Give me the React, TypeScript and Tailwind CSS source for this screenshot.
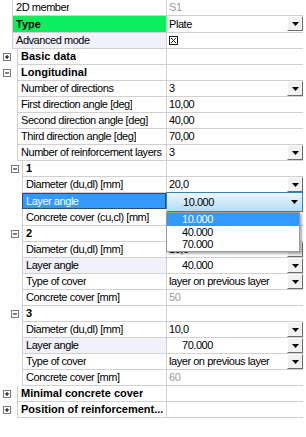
import React from 'react';

type Row = {
  label: string;
  value?: string;
  level: 0 | 1 | 2;
  expander?: '+' | '-';
  bold?: boolean;
  combo?: boolean;
  muted?: boolean;
  tint?: boolean;
  shift?: boolean;
  check?: boolean;
  green?: boolean;
  tall?: boolean;
  selected?: boolean;
};

const rows: Row[] = [
  { label: '2D member', value: 'S1', level: 0, muted: true },
  { label: 'Type', value: 'Plate', level: 0, bold: true, green: true, combo: true, tall: true },
  { label: 'Advanced mode', level: 0, check: true, tint: true },
  { label: 'Basic data', level: 1, expander: '+', bold: true },
  { label: 'Longitudinal', level: 1, expander: '-', bold: true },
  { label: 'Number of directions', value: '3', level: 1, combo: true },
  { label: 'First direction angle [deg]', value: '10,00', level: 1 },
  { label: 'Second direction angle [deg]', value: '40,00', level: 1 },
  { label: 'Third direction angle [deg]', value: '70,00', level: 1 },
  { label: 'Number of reinforcement layers', value: '3', level: 1, combo: true },
  { label: '1', level: 2, expander: '-', bold: true },
  { label: 'Diameter (du,dl) [mm]', value: '20,0', level: 2, combo: true },
  { label: 'Layer angle', value: '10.000', level: 2, selected: true },
  { label: 'Concrete cover (cu,cl) [mm]', value: '30', level: 2, tall: true },
  { label: '2', level: 2, expander: '-', bold: true },
  { label: 'Diameter (du,dl) [mm]', value: '10,0', level: 2, combo: true },
  { label: 'Layer angle', value: '40.000', level: 2, combo: true, tint: true, shift: true },
  { label: 'Type of cover', value: 'layer on previous layer', level: 2, combo: true },
  { label: 'Concrete cover [mm]', value: '50', level: 2, muted: true },
  { label: '3', level: 2, expander: '-', bold: true },
  { label: 'Diameter (du,dl) [mm]', value: '10,0', level: 2, combo: true },
  { label: 'Layer angle', value: '70.000', level: 2, combo: true, tint: true, shift: true },
  { label: 'Type of cover', value: 'layer on previous layer', level: 2, combo: true },
  { label: 'Concrete cover [mm]', value: '60', level: 2, muted: true },
  { label: 'Minimal concrete cover', level: 1, expander: '+', bold: true },
  { label: 'Position of reinforcement...', level: 1, expander: '+', bold: true },
];

const gutter = { 0: 'w-[12px]', 1: 'w-[17px] pl-[3px]', 2: 'w-[22px] pl-[11px]' };

function Expander({ sign }: { sign: '+' | '-' }) {
  return (
    <svg width="9" height="9" viewBox="0 0 9 9">
      <rect x="0.5" y="0.5" width="7" height="7" fill="#fff" stroke="#7a7a7a" />
      <path d="M2 4h4" stroke="#000" />
      {sign === '+' && <path d="M4 2v4" stroke="#000" />}
    </svg>
  );
}

function DropButton() {
  return (
    <div className="absolute right-0 top-0 h-[15px] w-[16px] flex items-center justify-center bg-[#f0f0f0] border border-t-white border-l-white border-r-[#6d6d6d] border-b-[#6d6d6d]">
      <svg width="7" height="4" viewBox="0 0 7 4">
        <path d="M0 0h7L3.5 4z" fill="#000" />
      </svg>
    </div>
  );
}

function CheckMark() {
  return (
    <svg width="9" height="9" viewBox="0 0 9 9">
      <rect x="0.5" y="0.5" width="8" height="8" fill="#fff" stroke="#222" />
      <path d="M2 2l5 5M7 2l-5 5" stroke="#222" />
    </svg>
  );
}

function OpenCombo({ value }: { value: string }) {
  return (
    <div className="absolute left-[-1px] right-0 top-[-1px] h-[20px]">
      <div className="h-full flex items-center pl-[16px] border border-[#3c7fb1] bg-gradient-to-b from-[#eaf6fd] to-[#b4dcf5]">
        {value}
        <svg className="absolute right-[5px] top-[8px]" width="7" height="4" viewBox="0 0 7 4">
          <path d="M0 0h7L3.5 4z" fill="#000" />
        </svg>
      </div>
      {/* dropdown list */}
      <div className="absolute left-0 top-[20px] z-10 w-[134px] h-[40px] bg-white border border-[#9a9a9a] shadow-[2px_2px_2px_rgba(0,0,0,0.3)]">
        <div className="h-[13px] leading-[13px] pl-[15px] bg-[#3399ff] text-white">10.000</div>
        <div className="h-[12px] leading-[12px] pl-[15px]">40.000</div>
        <div className="h-[12px] leading-[12px] pl-[15px]">70.000</div>
      </div>
    </div>
  );
}

function GridRow({ row }: { row: Row }) {
  const h = row.tall ? 'h-[17px]' : 'h-[16px]';
  const labelCls = row.selected
    ? 'bg-[#3399ff] text-white border border-[#1d4f86]'
    : row.green
      ? 'bg-[#0bef5f] border-l border-b border-[#d0d0d0]'
      : row.tint
        ? 'bg-[#f0f1fb] border-l border-b border-[#d0d0d0]'
        : 'border-l border-b border-[#d0d0d0]';

  return (
    <div className={`flex ${h}`}>
      <div className={`${gutter[row.level]} shrink-0 flex items-center`}>
        {row.expander && <Expander sign={row.expander} />}
      </div>
      <div
        className={`flex-1 min-w-0 flex items-center pl-[3px] ${labelCls} ${
          row.bold ? 'font-bold tracking-normal' : ''
        }`}
      >
        <span className="truncate">{row.label}</span>
      </div>
      <div className="relative w-[137px] shrink-0 flex items-center border-l border-b border-[#d0d0d0] pl-[2px]">
        {row.check && <CheckMark />}
        {row.value && !row.selected && (
          <span className={`${row.muted ? 'text-[#9a9a9a]' : ''} ${row.shift ? 'pl-[13px]' : ''}`}>
            {row.value}
          </span>
        )}
        {row.combo && <DropButton />}
        {row.selected && <OpenCombo value={row.value ?? ''} />}
      </div>
    </div>
  );
}

export default function App() {
  return (
    <div className="w-[306px] h-[437px] bg-white overflow-hidden text-[11px] tracking-[-0.45px] text-black font-['Liberation_Sans',Arial,sans-serif]">
      <div className="w-[303px] flex flex-col">
        {rows.map((r, i) => (
          <GridRow key={i} row={r} />
        ))}
      </div>
    </div>
  );
}
